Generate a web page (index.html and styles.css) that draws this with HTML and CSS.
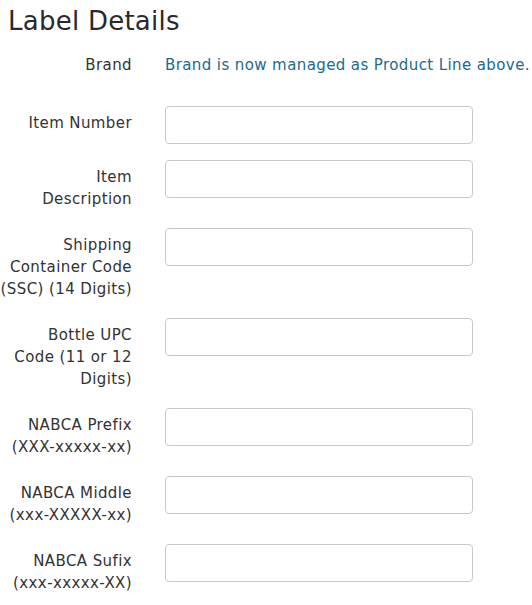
FILE: index.html
```html
<!DOCTYPE html>
<html lang="en">
<head>
<meta charset="utf-8">
<title>Label Details</title>
<link rel="stylesheet" href="styles.css">
</head>
<body>
<main class="page">
  <h1 class="title">Label Details</h1>
  <form class="form">
    <div class="row row-brand">
      <span class="label">Brand</span>
      <span class="note">Brand is now managed as Product Line above.</span>
    </div>
    <div class="row">
      <label class="label" for="f1">Item Number</label>
      <input class="input" id="f1" type="text">
    </div>
    <div class="row">
      <label class="label" for="f2">Item<br>Description</label>
      <input class="input" id="f2" type="text">
    </div>
    <div class="row">
      <label class="label" for="f3">Shipping<br>Container Code<br>(SSC) (14 Digits)</label>
      <input class="input" id="f3" type="text">
    </div>
    <div class="row">
      <label class="label" for="f4">Bottle UPC<br>Code (11 or 12<br>Digits)</label>
      <input class="input" id="f4" type="text">
    </div>
    <div class="row">
      <label class="label" for="f5">NABCA Prefix<br>(XXX-xxxxx-xx)</label>
      <input class="input" id="f5" type="text">
    </div>
    <div class="row">
      <label class="label" for="f6">NABCA Middle<br>(xxx-XXXXX-xx)</label>
      <input class="input" id="f6" type="text">
    </div>
    <div class="row">
      <label class="label" for="f7">NABCA Sufix<br>(xxx-xxxxx-XX)</label>
      <input class="input" id="f7" type="text">
    </div>
  </form>
</main>
</body>
</html>
```

FILE: styles.css
```css
html, body {
  margin: 0;
  padding: 0;
  background: #ffffff;
}

body {
  font-family: "DejaVu Sans", "Noto Sans", sans-serif;
  font-size: 15px;
  line-height: 22px;
  letter-spacing: 0.4px;
  color: #333333;
  overflow: hidden;
}

.page {
  padding: 5px 0 0 0;
}

.title {
  margin: 0 0 11px 8px;
  font-size: 26px;
  line-height: 32px;
  font-weight: 400;
  letter-spacing: 0.25px;
  color: #2a2a2a;
}

.form {
  display: flex;
  flex-direction: column;
}

.row {
  display: flex;
  align-items: flex-start;
  gap: 33px;
  margin-bottom: 16px;
}

.row-brand {
  min-height: 30px;
  margin-bottom: 28px;
}

.label {
  flex: 0 0 132px;
  width: 132px;
  text-align: right;
  white-space: nowrap;
  padding: 6px 0 2px;
  color: #333333;
}

.note {
  padding: 6px 0 2px;
  white-space: nowrap;
  color: #206a8f;
}

.input {
  box-sizing: border-box;
  width: 308px;
  height: 38px;
  margin: 0;
  padding: 6px 12px;
  border: 1px solid #c9c9c9;
  border-radius: 4px;
  background: #ffffff;
  font: inherit;
}
```
